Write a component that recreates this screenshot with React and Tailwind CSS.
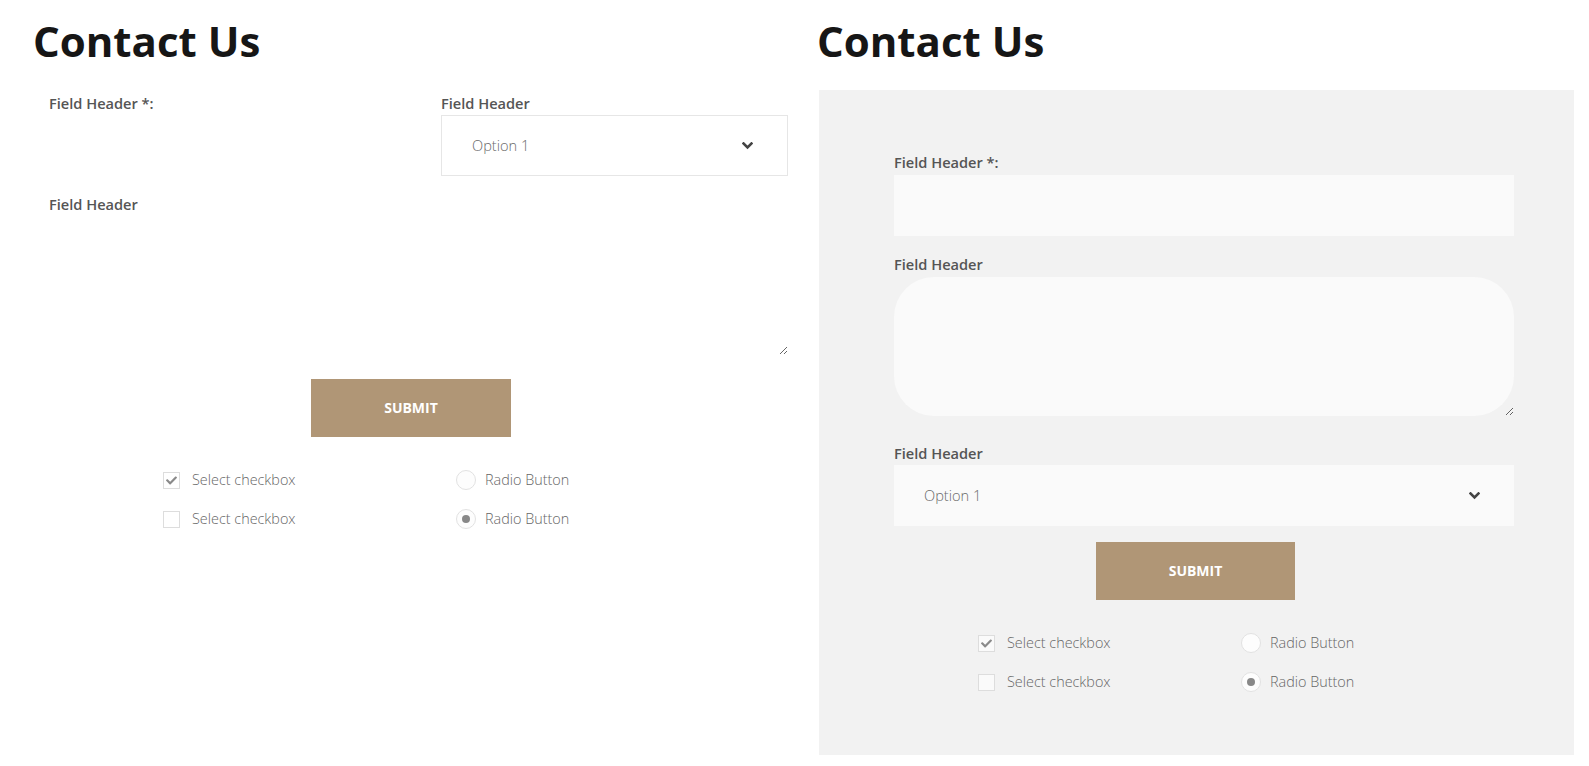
import React from "react";
import { FaCheck } from "react-icons/fa";

function Label({ children, className = "" }) {
  return (
    <div className={"h-[20px] leading-[20px] text-[14.6px] font-semibold text-[#555555] " + className}>
      {children}
    </div>
  );
}

function Chevron() {
  return (
    <svg width="11" height="8" viewBox="0 0 11 8" className="block">
      <polyline points="1.5,1.5 5.5,5.5 9.5,1.5" fill="none" stroke="#444444" strokeWidth="2.6" strokeLinecap="square" />
    </svg>
  );
}

function SelectBox({ className = "" }) {
  return (
    <div className={"flex h-[61px] items-center justify-between pl-[30px] pr-[34px] " + className}>
      <span className="text-[14.6px] font-light text-[#6a6a6a]">Option 1</span>
      <Chevron />
    </div>
  );
}

function Checks({ boxBg, padLeft, colW }) {
  const Box = ({ checked }) => (
    <span className={"flex h-[17px] w-[17px] items-center justify-center border border-[#dddddd] " + boxBg}>
      {checked ? <FaCheck className="text-[11px] text-[#8a8a8a]" /> : null}
    </span>
  );
  const Radio = ({ checked }) => (
    <span className="flex h-[20px] w-[20px] items-center justify-center rounded-full border border-[#e2e2e2] bg-[#fdfdfd]">
      {checked ? <span className="h-[8px] w-[8px] rounded-full bg-[#888888]" /> : null}
    </span>
  );
  const txt = "text-[14.4px] font-light text-[#666666] leading-[20px]";
  return (
    <div className={"grid gap-y-[19px] " + padLeft + " " + colW}>
      <div className="flex h-[20px] items-center gap-[12px]">
        <Box checked />
        <span className={txt}>Select checkbox</span>
      </div>
      <div className="flex h-[20px] items-center gap-[9px]">
        <Radio />
        <span className={txt}>Radio Button</span>
      </div>
      <div className="flex h-[20px] items-center gap-[12px]">
        <Box />
        <span className={txt}>Select checkbox</span>
      </div>
      <div className="flex h-[20px] items-center gap-[9px]">
        <Radio checked />
        <span className={txt}>Radio Button</span>
      </div>
    </div>
  );
}

function Submit({ className = "" }) {
  return (
    <button
      type="button"
      className={"flex h-[58px] items-center justify-center bg-[#b09676] pb-[2px] text-[14px] font-bold text-white " + className}
    >
      SUBMIT
    </button>
  );
}

export default function App() {
  return (
    <div className="flex h-[766px] w-[1589px] bg-white font-['Open_Sans',sans-serif]">
      {/* Left variant */}
      <div className="w-[819px] shrink-0">
        <h1 className="mt-[12px] pl-[33px] text-[42px] font-bold leading-[57px] text-[#161616]">Contact Us</h1>
        <form className="mt-[24px] w-[788px] pl-[49px]">
          <div className="grid grid-cols-[347px_347px] gap-x-[45px]">
            <div>
              <Label className="mb-[2px]">Field Header *:</Label>
              <div className="h-[61px]" />
            </div>
            <div>
              <Label className="mb-[2px]">Field Header</Label>
              <SelectBox className="border border-[#e6e6e6] bg-white" />
            </div>
          </div>
          <Label className="mt-[18px] mb-[2px]">Field Header</Label>
          <textarea className="block h-[139px] w-full border-0 bg-white outline-none" />
          <Submit className="mt-[24px] ml-[262px] w-[200px]" />
          <Checks boxBg="bg-white" padLeft="pl-[114px] mt-[33px]" colW="grid-cols-[293px_auto]" />
        </form>
      </div>

      {/* Right variant */}
      <div className="w-[755px] shrink-0">
        <h1 className="mt-[12px] -ml-[2px] text-[42px] font-bold leading-[57px] text-[#161616]">Contact Us</h1>
        <div className="mt-[21px] h-[665px] bg-[#f2f2f2] pt-[62px] pl-[75px]">
          <div className="w-[620px]">
            <Label className="mb-[3px]">Field Header *:</Label>
            <div className="h-[61px] bg-[#fafafa]" />
            <Label className="mt-[18px] mb-[3px]">Field Header</Label>
            <textarea className="block h-[139px] w-full rounded-[40px] border-0 bg-[#fafafa] outline-none" />
            <Label className="mt-[27px] mb-[2px]">Field Header</Label>
            <SelectBox className="bg-[#fafafa]" />
            <Submit className="mt-[16px] ml-[202px] w-[199px]" />
            <Checks boxBg="bg-[#fafafa]" padLeft="pl-[84px] mt-[33px]" colW="grid-cols-[263px_auto]" />
          </div>
        </div>
      </div>
    </div>
  );
}
